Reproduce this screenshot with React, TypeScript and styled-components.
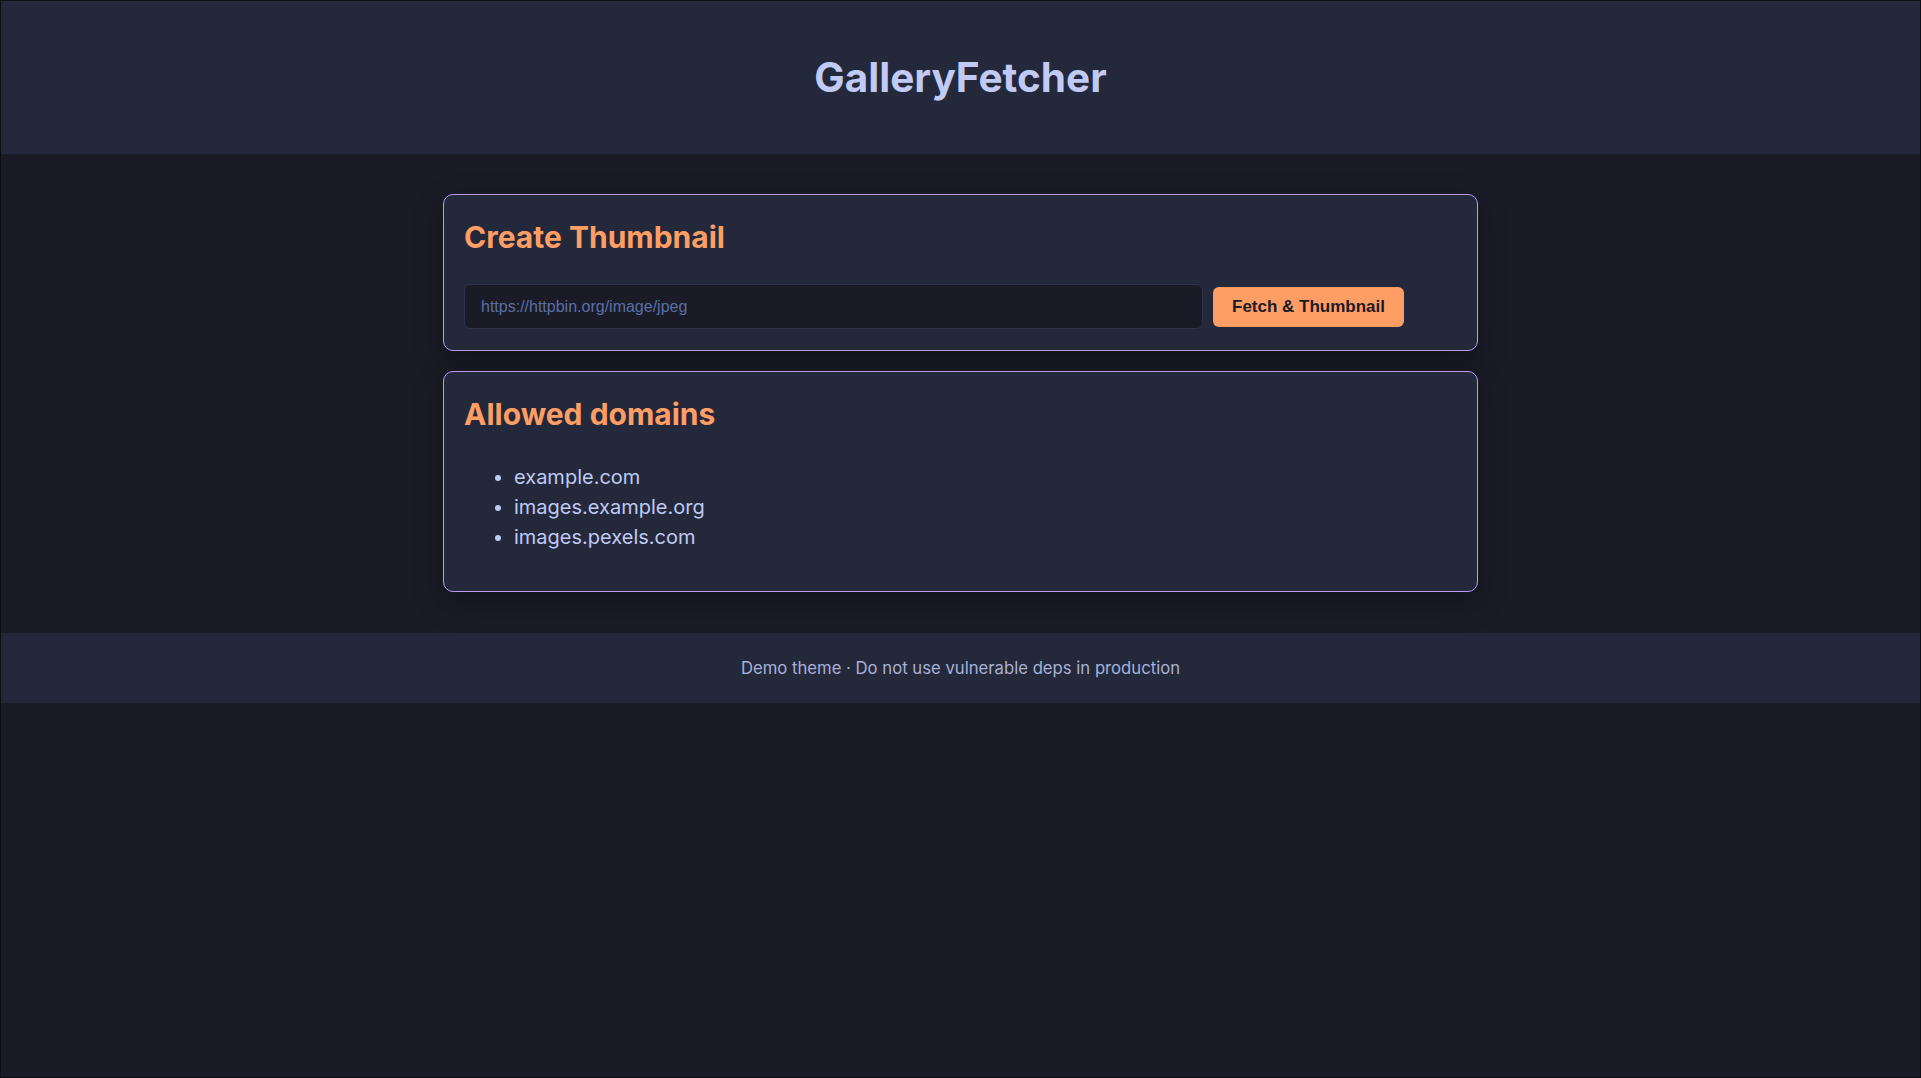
import React from "react";
import styled, { createGlobalStyle } from "styled-components";

const GlobalStyle = createGlobalStyle`
  * { box-sizing: border-box; }
  html, body { margin: 0; padding: 0; background: #1a1b26; }
  body { font-family: Inter, "Noto Sans", sans-serif; color: #c0caf5; }
`;

const Frame = styled.div`
  min-height: 100vh;
  border: 1px solid #0d0e14;
  background: #1a1b26;
  display: flex;
  flex-direction: column;
`;

const Header = styled.header`
  background: #24283b;
  height: 153px;
  display: flex;
  align-items: center;
  justify-content: center;
`;

const Title = styled.h1`
  margin: 0;
  font-family: Inter, sans-serif;
  font-weight: 700;
  font-size: 40.5px;
  color: #c0caf5;
`;

const Main = styled.main`
  padding: 40px 0 41px;
  display: flex;
  flex-direction: column;
  align-items: center;
  gap: 20px;
`;

const Card = styled.section`
  width: 1035px;
  background: #24283b;
  border: 1px solid #bb9af7;
  border-radius: 10px;
  padding: 20px 20px 21px;
  box-shadow: 0 10px 30px rgba(0, 0, 0, 0.3);
`;

const CardTitle = styled.h2`
  margin: 0;
  font-family: Inter, sans-serif;
  font-weight: 700;
  font-size: 30px;
  line-height: 44px;
  color: #ff9e64;
`;

const Form = styled.form`
  display: flex;
  align-items: center;
  gap: 10px;
  margin-top: 25px;
`;

const UrlInput = styled.input`
  width: 739px;
  height: 45px;
  background: #1a1b26;
  border: 1px solid #2f3349;
  border-radius: 6px;
  padding: 0 16px;
  font-family: "Liberation Sans", Arial, sans-serif;
  font-size: 16px;
  color: #c0caf5;
  outline: none;
  &::placeholder { color: #5a6fa8; }
`;

const Button = styled.button`
  height: 40px;
  padding: 0 19px;
  background: #ff9e64;
  color: #1a1b26;
  border: none;
  border-radius: 6px;
  font-family: "Liberation Sans", Arial, sans-serif;
  font-weight: 700;
  font-size: 17px;
  cursor: pointer;
`;

const List = styled.ul`
  margin: 26px 0 18px;
  padding-left: 50px;
  font-family: Inter, sans-serif;
  font-size: 20px;
  line-height: 30px;
  color: #c0caf5;
`;

const Item = styled.li``;

const Footer = styled.footer`
  background: #24283b;
  height: 70px;
  display: flex;
  align-items: center;
  justify-content: center;
  font-family: Inter, sans-serif;
  font-size: 16.7px;
  color: #a9b1d6;
`;

const domains = ["example.com", "images.example.org", "images.pexels.com"];

export default function App() {
  return (
    <>
      <GlobalStyle />
      <Frame>
        <Header>
          <Title>GalleryFetcher</Title>
        </Header>
        <Main>
          <Card>
            <CardTitle>Create Thumbnail</CardTitle>
            <Form onSubmit={(e) => e.preventDefault()}>
              <UrlInput placeholder="https://httpbin.org/image/jpeg" />
              <Button type="submit">Fetch &amp; Thumbnail</Button>
            </Form>
          </Card>
          <Card>
            <CardTitle>Allowed domains</CardTitle>
            <List>
              {domains.map((d) => (
                <Item key={d}>{d}</Item>
              ))}
            </List>
          </Card>
        </Main>
        <Footer>Demo theme · Do not use vulnerable deps in production</Footer>
      </Frame>
    </>
  );
}
